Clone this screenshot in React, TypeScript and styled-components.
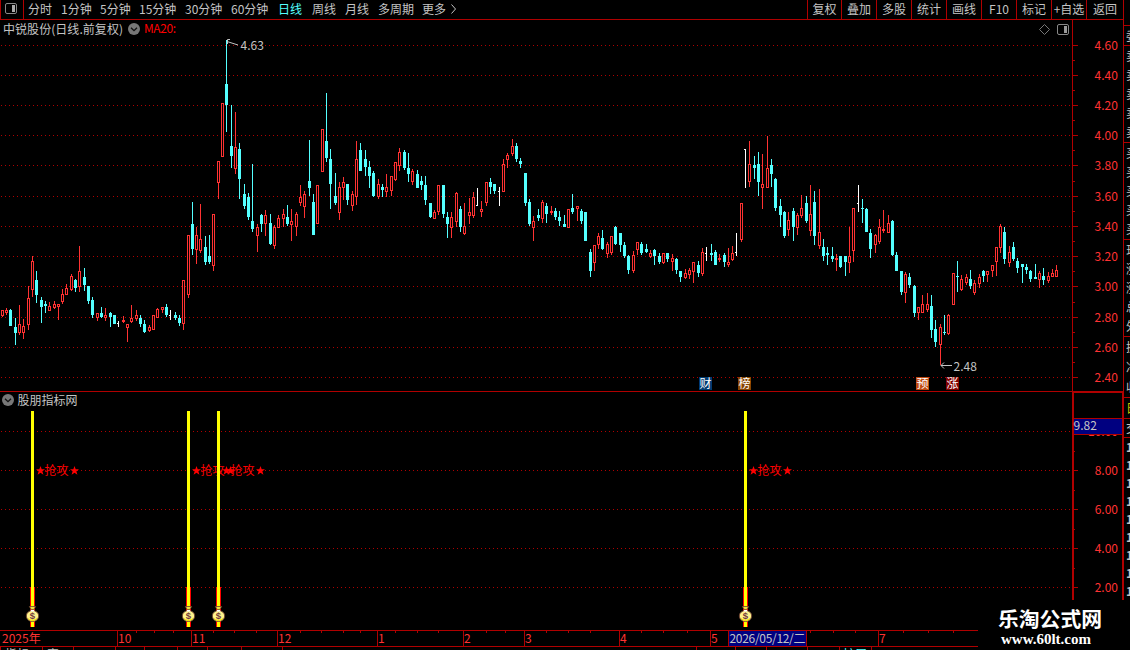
import React from 'react';
import styled, { createGlobalStyle } from 'styled-components';

const FONT = '"Noto Sans CJK SC", "Liberation Sans", sans-serif';
const LINE = '#b00000';
const RED = '#ff3232';
const CYAN = '#54ffff';
const GREY = '#c4c4c4';

const GlobalStyle = createGlobalStyle`
  body { margin: 0; background: #000; overflow: hidden; }
  * { box-sizing: border-box; }
`;

const Screen = styled.div`
  width: 1130px;
  height: 650px;
  background: #000;
  color: ${GREY};
  font: 400 12px/18px ${FONT};
  display: grid;
  grid-template-columns: 1124px 6px;
  overflow: hidden;
  position: relative;
  white-space: nowrap;
`;

const Terminal = styled.div`
  display: grid;
  grid-template-rows: 20px 371px 239px 17px 3px;
  min-width: 0;
`;

const Toolbar = styled.div`
  display: flex;
  justify-content: space-between;
  border-bottom: 1px solid ${LINE};
  border-right: 1px solid ${LINE};
`;

const Periods = styled.div`
  display: flex;
`;

const LayoutToggle = styled.div`
  width: 24px;
  border-left: 1px solid ${LINE};
  border-right: 1px solid ${LINE};
  margin-right: 4px;
  svg { display: block; }
`;

const Period = styled.span<{ $w: number; $active?: boolean }>`
  width: ${p => p.$w}px;
  color: ${p => (p.$active ? CYAN : GREY)};
`;

const Tools = styled.div`
  display: flex;
`;

const Tool = styled.span<{ $w: number }>`
  width: ${p => p.$w}px;
  border-left: 1px solid ${LINE};
  text-align: center;
`;

const PanelRow = styled.div`
  display: grid;
  grid-template-columns: 1072px 52px;
  svg { display: block; }
`;

const TimeRow = styled.div`
  svg { display: block; }
`;

const QuoteStrip = styled.div`
  overflow: hidden;
  height: 600px;
  padding-top: 25px;
`;

const QuoteGroup = styled.div<{ $h: number }>`
  height: ${p => p.$h}px;
  border-top: 1px solid ${LINE};
  display: flex;
  flex-direction: column;
  justify-content: space-around;
  padding-left: 2px;
  overflow: hidden;
`;

const QuoteCell = styled.span<{ $color?: string; $bold?: boolean }>`
  color: ${p => p.$color || GREY};
  font-weight: ${p => (p.$bold ? 700 : 400)};
  line-height: 14px;
`;

const Watermark = styled.div`
  position: absolute;
  left: 978px;
  top: 600px;
  width: 152px;
  height: 50px;
  background: #000;
  color: #fff;
  padding: 5px 0 0 20px;
`;

const SiteName = styled.div`
  font: 700 20.8px/26px ${FONT};
`;

const SiteUrl = styled.div`
  font: 700 15px/16px "Liberation Serif", serif;
  padding-left: 3px;
`;

/* x, high, body top, body bottom, low, kind (r = up, c = down, w = flat) */
const SERIES = `
2 310 310 316 317 r;6 308 310 313 315 r;10 309 310 326 326 c;15 318 327 333 345 c;19 305 324 333 335 r;23 319 326 333 339 r;
28 286 298 325 330 r;32 256 261 290 297 r;36 271 280 295 303 c;41 297 300 307 323 c;45 301 304 306 313 c;49 302 306 311 311 r;
54 301 304 308 309 r;58 304 304 307 320 r;62 289 294 302 304 r;66 284 288 295 295 r;71 274 276 290 291 r;75 279 280 288 292 c;
79 246 271 287 292 r;84 268 277 285 291 c;88 286 286 301 304 c;92 297 300 315 318 c;97 313 313 318 321 r;101 307 313 317 318 c;
105 308 315 318 321 r;110 312 313 317 327 c;114 315 315 324 324 c;118 321 323 324 327 w;123 316 320 322 323 r;127 324 324 328 342 r;
131 305 318 322 323 r;136 310 315 319 321 r;140 315 318 324 327 c;144 320 324 332 333 c;149 325 327 331 332 r;153 315 315 330 330 r;
157 308 309 318 318 r;162 307 307 310 313 r;166 304 307 315 317 c;170 310 315 316 320 w;175 312 315 318 320 c;179 315 318 323 326 c;
183 280 280 324 330 r;188 235 235 295 298 r;192 202 224 249 255 c;196 227 235 250 264 r;200 204 239 251 253 r;205 236 247 262 265 c;
209 235 256 262 264 c;213 214 214 266 271 r;218 161 161 183 199 r;222 103 103 157 157 r;226 40 84 105 132 c;231 105 146 156 168 c;
235 112 147 169 174 r;239 143 149 179 199 c;244 184 194 206 209 c;248 193 197 217 220 c;252 164 221 229 232 c;257 224 227 236 252 r;
261 214 215 224 232 c;265 210 215 224 236 r;270 214 223 244 245 c;274 225 227 246 249 r;278 215 218 228 228 r;283 209 214 219 227 r;
287 205 217 224 226 c;291 209 221 225 241 r;296 212 214 227 236 r;300 185 197 203 206 r;304 191 194 207 218 r;309 140 181 188 196 c;
313 194 202 235 235 c;317 185 185 224 224 r;322 129 129 172 172 r;326 93 141 158 162 c;330 149 159 184 209 c;335 173 196 203 205 c;
339 182 187 213 220 r;343 177 182 188 200 r;347 184 184 200 205 c;352 191 194 206 211 r;356 141 159 197 205 r;360 143 150 171 171 c;
365 150 159 167 176 c;369 161 167 176 188 c;373 171 173 196 197 c;378 179 184 197 199 r;382 184 187 190 197 c;386 174 187 192 197 r;
391 176 176 191 196 r;395 162 162 180 181 r;399 148 152 166 171 r;404 150 152 168 170 c;408 153 168 174 182 c;412 169 171 182 185 r;
417 170 174 188 188 c;421 176 181 185 190 c;425 176 185 200 205 c;430 203 203 217 218 c;434 210 212 219 219 r;438 185 185 212 215 r;
443 185 185 214 218 c;447 212 217 224 238 c;451 212 217 228 238 r;456 192 193 222 227 r;460 206 209 227 232 c;464 203 226 234 235 r;
469 198 212 216 224 r;473 192 197 216 218 r;477 188 205 206 206 w;481 201 209 212 217 r;486 182 182 203 206 r;490 178 182 187 194 c;
494 184 184 191 194 c;499 187 191 192 206 w;503 159 164 192 192 r;507 153 155 160 168 r;512 139 146 154 156 r;516 143 146 159 162 c;
520 158 161 164 168 c;525 173 173 203 206 c;529 199 202 224 226 c;533 216 221 228 241 r;538 209 215 218 221 c;542 200 202 219 223 r;
546 203 206 214 223 c;551 206 211 213 215 r;555 208 211 217 220 c;559 211 217 221 226 c;564 215 224 227 227 c;568 209 209 228 228 r;
572 194 208 212 214 c;577 206 206 209 221 r;581 209 211 221 224 c;585 212 212 241 241 c;590 249 252 271 277 c;594 245 245 263 271 r;
598 233 236 245 249 r;602 230 238 249 250 c;607 242 244 254 258 r;611 236 236 253 255 r;615 226 227 244 245 c;620 233 233 245 252 c;
624 242 245 256 258 c;628 255 256 270 274 c;633 251 255 271 273 r;637 242 242 250 255 r;641 242 244 253 255 c;646 244 249 252 253 c;
650 250 253 257 258 r;654 249 250 256 265 c;659 253 256 262 264 c;663 253 253 263 264 r;667 253 253 259 262 c;672 254 258 262 271 r;
676 258 259 270 274 c;680 271 271 277 282 c;685 269 273 278 279 r;689 268 270 275 279 r;693 262 262 272 283 r;698 261 265 273 277 c;
702 248 252 274 276 r;706 247 253 254 261 w;711 244 253 255 261 c;715 250 252 265 265 c;719 254 258 260 262 r;724 253 255 262 267 c;
728 248 262 265 267 r;732 246 253 260 261 r;736 233 252 253 256 w;741 203 203 240 242 r;745 149 149 150 188 w;749 141 164 182 187 r;
754 156 165 168 179 c;758 152 164 182 196 c;762 154 184 188 209 r;767 136 168 188 188 r;771 159 165 174 187 c;775 178 179 208 211 c;
780 199 206 215 227 c;784 211 212 236 238 c;788 212 220 230 236 r;793 208 211 227 241 c;797 213 215 228 235 r;801 195 208 216 218 r;
806 196 203 221 223 c;810 185 214 231 236 r;814 191 202 236 245 c;819 189 232 246 249 r;823 239 247 256 261 c;827 247 253 255 265 c;
832 247 256 259 262 c;836 254 258 260 271 r;840 256 256 267 268 c;845 256 256 262 276 c;849 227 256 263 273 r;853 208 208 251 262 r;
858 185 203 204 212 w;862 199 208 209 223 c;866 208 209 232 232 c;870 229 233 249 258 c;875 234 235 245 253 r;879 219 227 242 244 r;
883 210 229 231 233 r;888 215 223 233 233 r;892 220 221 255 256 c;896 252 255 271 271 c;901 271 271 292 295 c;905 272 274 293 303 r;
909 273 277 285 288 c;914 285 286 313 317 c;918 307 307 313 320 r;922 295 304 313 313 r;927 293 304 310 312 r;931 295 306 330 338 c;
935 320 329 342 347 c;940 324 327 345 365 r;944 315 332 333 335 c;948 314 315 334 335 r;953 273 273 305 305 r;957 261 276 277 292 c;
961 275 279 290 291 r;966 274 277 283 285 r;970 270 279 286 289 c;974 280 283 293 295 r;979 274 277 284 288 r;983 270 271 276 282 c;
987 271 271 275 282 r;992 265 265 271 277 r;996 247 247 262 276 r;1000 224 226 248 253 r;1004 227 232 259 264 c;1009 246 252 263 267 r;
1013 242 247 259 261 c;1017 258 261 268 273 c;1022 264 264 267 283 c;1026 264 267 270 274 c;1030 270 271 279 282 c;1035 264 277 279 279 c;
1039 271 273 280 288 r;1043 268 276 280 285 c;1048 272 276 281 283 r;1052 269 273 277 277 r;1056 265 270 277 277 r`;

const candles = SERIES.trim().split(';').map(row => {
  const [x, high, top, bottom, low, kind] = row.trim().split(' ');
  return { x: +x, high: +high, top: +top, bottom: +bottom, low: +low, kind };
});

type CandleProps = { x: number; high: number; top: number; bottom: number; low: number; kind: string };

const Candle = ({ x, high, top, bottom, low, kind }: CandleProps) => {
  if (kind === 'w') {
    return (
      <g fill="#fff">
        <rect x={x} y={high} width={1} height={low - high} />
        <rect x={x - 1} y={top} width={1} height={1} />
      </g>
    );
  }
  const color = kind === 'r' ? RED : CYAN;
  return (
    <g fill={color}>
      <rect x={x} y={high} width={1} height={low - high} />
      <rect x={x - 1} y={top} width={3} height={bottom - top} />
      {kind === 'r' && bottom - top > 2 && <rect x={x} y={top + 1} width={1} height={bottom - top - 2} fill="#000" />}
    </g>
  );
};

const GridLine = ({ y }: { y: number }) => (
  <line x1={1} x2={1072} y1={y + 0.5} y2={y + 0.5} stroke={LINE} strokeDasharray="1 3" />
);

const Chevron = ({ cx, cy }: { cx: number; cy: number }) => (
  <g>
    <circle cx={cx} cy={cy} r={6} fill="#777" />
    <path d={`M${cx - 3} ${cy - 1.3}l3 3l3 -3`} stroke="#111" strokeWidth={1.3} fill="none" />
  </g>
);

const PRICE_TICKS: [string, number][] = [
  ['4.60', 45], ['4.40', 75], ['4.20', 105], ['4.00', 135], ['3.80', 165], ['3.60', 196],
  ['3.40', 226], ['3.20', 256], ['3.00', 286], ['2.80', 317], ['2.60', 347], ['2.40', 377],
];
const PRICE_MINOR = [60, 90, 120, 150, 181, 211, 241, 271, 302, 332, 362];
const IND_TICKS: [string, number][] = [['10.00', 431], ['8.00', 470], ['6.00', 509], ['4.00', 548], ['2.00', 587]];
const IND_MINOR = [451, 490, 529, 568];

const BADGES: [string, number, string][] = [
  ['财', 699, '#003a70'], ['榜', 738, '#884400'], ['预', 916, '#c04a10'], ['涨', 946, '#800000'],
];

const PriceChart = () => (
  <svg width={1072} height={371} viewBox="0 20 1072 371" shapeRendering="crispEdges" fontFamily={FONT} fontSize={12}>
    {PRICE_TICKS.map(([l, y]) => <GridLine key={l} y={y} />)}
    {candles.map(c => <Candle key={c.x} {...c} />)}
    <g shapeRendering="auto">
      <text x={3} y={33.5} fill={GREY} textLength={120}>中锐股份(日线.前复权)</text>
      <Chevron cx={134} cy={29} />
      <text x={144} y={33} fill="#f00" textLength={32}>MA20:</text>
      <path d="M1044.5 24.5l5 5l-5 5l-5-5z" fill="none" stroke="#777" />
      <rect x={1057.5} y={24.5} width={11} height={10} rx={1.5} fill="none" stroke="#888" />
      <rect x={1064} y={26} width={3} height={7} fill="#999" />
      <path d="M227 41.5L238 45M230 39.5H227.5V44" stroke={GREY} fill="none" />
      <text x={240.5} y={50} fill={GREY} textLength={23.5}>4.63</text>
      <path d="M941 365.5H952M944 362.5l-3 3l3 3" stroke={GREY} fill="none" />
      <text x={953.5} y={371} fill={GREY} textLength={23.5}>2.48</text>
    </g>
    {BADGES.map(([t, x, c]) => (
      <g key={t}>
        <rect x={x} y={377} width={13} height={13} fill={c} />
        <text x={x + 0.5} y={388} fill="#fff">{t}</text>
      </g>
    ))}
  </svg>
);

const PriceAxis = () => (
  <svg width={52} height={371} viewBox="1072 20 52 371" shapeRendering="crispEdges" fontFamily={FONT} fontSize={12}>
    <rect x={1072} y={20} width={1} height={371} fill={LINE} />
    <rect x={1123} y={20} width={1} height={371} fill={LINE} />
    {PRICE_MINOR.map(y => <rect key={y} x={1073} y={y} width={2} height={1} fill={LINE} />)}
    {PRICE_TICKS.map(([l, y]) => (
      <g key={l}>
        <rect x={1073} y={y} width={5} height={1} fill={LINE} />
        <text x={1094.5} y={y + 5} fill={RED} textLength={23.5}>{l}</text>
      </g>
    ))}
  </svg>
);

const STAR = 'M0-4.5L1.2-1.3H4.5L1.9.8L2.9 4.2L0 2.2L-2.9 4.2L-1.9.8L-4.5-1.3H-1.2Z';

const MoneyBag = ({ x }: { x: number }) => (
  <g shapeRendering="auto" transform={`translate(${x + 0.5} 606)`}>
    <path d="M-3.2.5H3.2L1.2 3.5H-1.2Z" fill="#f4e23c" stroke="#6b4030" strokeWidth={0.8} />
    <ellipse cx={0} cy={10} rx={6.2} ry={5.5} fill="#fff28c" stroke="#6b4030" strokeWidth={0.9} />
    <path d="M-5 11.5Q-3.5 15 0 15Q3.5 15 5 11.5Q2 14 0 13.8Q-3 13.8-5 11.5Z" fill="#f5e400" />
    <path d="M-1.5 4L1.5 4L2 5.5H-2Z" fill="#fff" />
    <text x={0} y={13.3} textAnchor="middle" fontFamily="Liberation Sans, sans-serif" fontWeight={700} fontSize={9.5} fill="#743c3c">$</text>
  </g>
);

const Signal = ({ x }: { x: number }) => (
  <g>
    <rect x={x - 2} y={587} width={5} height={40} fill="#f00" />
    <rect x={x - 1} y={411} width={3} height={216} fill="#ff0" />
    <MoneyBag x={x} />
    <g fill="#f00" shapeRendering="auto">
      <path d={STAR} transform={`translate(${x + 8.5} 470.5)`} />
      <text x={x + 12.5} y={475}>抢攻</text>
      <path d={STAR} transform={`translate(${x + 42.5} 470.5)`} />
    </g>
  </g>
);

const IndicatorChart = () => (
  <svg width={1072} height={239} viewBox="0 391 1072 239" shapeRendering="crispEdges" fontFamily={FONT} fontSize={12}>
    <rect x={0} y={391} width={1072} height={1} fill={LINE} />
    {IND_TICKS.map(([l, y]) => <GridLine key={l} y={y} />)}
    <g shapeRendering="auto">
      <Chevron cx={8} cy={400} />
      <text x={17.5} y={404.5} fill={GREY}>股朋指标网</text>
    </g>
    {[32, 188, 218, 745].map(x => <Signal key={x} x={x} />)}
  </svg>
);

const IndicatorAxis = () => (
  <svg width={52} height={239} viewBox="1072 391 52 239" shapeRendering="crispEdges" fontFamily={FONT} fontSize={12}>
    <path d="M1073 600V392H1123V600" fill="none" stroke={LINE} strokeWidth={2} />
    {IND_MINOR.map(y => <rect key={y} x={1074} y={y} width={1} height={1} fill={LINE} />)}
    {IND_TICKS.map(([l, y]) => (
      <g key={l}>
        <rect x={1074} y={y} width={4} height={1} fill={LINE} />
        <text x={1118} y={y + 5} textAnchor="end" fill={RED}>{l}</text>
      </g>
    ))}
    <rect x={1074} y={418} width={48} height={17} fill={LINE} />
    <rect x={1074} y={419} width={48} height={15} fill="#000080" />
    <text x={1073.5} y={430} fill={GREY} textLength={23.5}>9.82</text>
  </svg>
);

const MONTHS: [string, number, number][] = [
  ['2025年', 2, -1], ['10', 118, 117], ['11', 192, 191], ['12', 278, 277], ['1', 378, 377], ['2', 464, 463],
  ['3', 525, 524], ['4', 620, 619], ['5', 711, 710], ['7', 879, 878],
];
const WEEK_TICKS = [
  136, 154, 173, 213, 234, 256, 300, 321, 343, 360, 395, 417, 438, 486, 505, 546, 568, 590, 641, 663, 687,
  810, 833, 855, 903, 928, 953,
];

const TimeAxis = () => (
  <svg width={1124} height={17} viewBox="0 630 1124 17" shapeRendering="crispEdges" fontFamily={FONT} fontSize={12}>
    <g fill={LINE}>
      <rect x={0} y={630} width={978} height={1} />
      <rect x={0} y={646} width={978} height={1} />
      {WEEK_TICKS.map(x => <rect key={x} x={x} y={631} width={1} height={2} />)}
      {MONTHS.map(m => <rect key={m[2]} x={m[2]} y={631} width={1} height={15} />)}
      <rect x={728} y={631} width={79} height={15} />
    </g>
    {MONTHS.map(([t, x]) => <text key={t} x={x} y={643} fill={RED}>{t}</text>)}
    <rect x={729} y={631} width={77} height={15} fill="#000080" />
    <text x={729.5} y={642.5} fill={GREY} textLength={76}>2026/05/12/二</text>
  </svg>
);

const TAB_EDGES = [0, 42, 73, 115, 144, 177, 207, 241, 282, 696, 735, 766, 807, 839, 871];

const BottomTabs = () => (
  <svg width={1124} height={3} viewBox="0 647 1124 3" shapeRendering="crispEdges" fontFamily={FONT} fontSize={12}>
    {TAB_EDGES.map(x => <rect key={x} x={x} y={647} width={1} height={3} fill={LINE} />)}
    <text x={5} y={659} fill={GREY}>指标</text>
    <text x={47} y={659} fill={GREY}>窗</text>
    <text x={843} y={659} fill={CYAN}>扩展</text>
  </svg>
);

const PERIODS: [string, number][] = [
  ['分时', 33], ['1分钟', 39], ['5分钟', 39], ['15分钟', 46], ['30分钟', 46], ['60分钟', 47], ['日线', 34],
  ['周线', 33], ['月线', 33], ['多周期', 44], ['更多', 28],
];
const TOOLS: [string, number][] = [
  ['复权', 34], ['叠加', 35], ['多股', 35], ['统计', 35], ['画线', 35], ['F10', 35], ['标记', 35], ['+自选', 35], ['返回', 37],
];
const QUOTES: [string, number][] = [['委', 20], ['卖卖卖卖卖', 97], ['买买买买买', 97], ['现涨涨总外', 97], ['换净收', 61]];

const App = () => (
  <>
    <GlobalStyle />
    <Screen>
      <Terminal>
        <Toolbar>
          <Periods>
            <LayoutToggle>
              <svg width={20} height={19}>
                <rect x={4.5} y={3.5} width={11} height={10} rx={1.5} fill="none" stroke="#888" />
                <rect x={11} y={5} width={3} height={7} fill="#aaa" />
              </svg>
            </LayoutToggle>
            {PERIODS.map(([t, w]) => <Period key={t} $w={w} $active={t === '日线'}>{t}</Period>)}
            <svg width={8} height={19}>
              <path d="M1.5 4.5l4 4.5l-4 4.5" fill="none" stroke={GREY} />
            </svg>
          </Periods>
          <Tools>
            {TOOLS.map(([t, w]) => <Tool key={t} $w={w}>{t}</Tool>)}
          </Tools>
        </Toolbar>
        <PanelRow>
          <PriceChart />
          <PriceAxis />
        </PanelRow>
        <PanelRow>
          <IndicatorChart />
          <IndicatorAxis />
        </PanelRow>
        <TimeRow><TimeAxis /></TimeRow>
        <TimeRow><BottomTabs /></TimeRow>
      </Terminal>
      <QuoteStrip>
        {QUOTES.map(([t, h], i) => (
          <QuoteGroup key={i} $h={h}>
            {t.split('').map((c, j) => <QuoteCell key={j}>{c}</QuoteCell>)}
          </QuoteGroup>
        ))}
        <QuoteGroup $h={21}><QuoteCell $color="#c8c800">日</QuoteCell></QuoteGroup>
        <QuoteGroup $h={19}><QuoteCell>交</QuoteCell></QuoteGroup>
        <QuoteGroup $h={163}>
          {Array.from({ length: 9 }, (_, i) => <QuoteCell key={i} $bold>1</QuoteCell>)}
        </QuoteGroup>
      </QuoteStrip>
      <Watermark>
        <SiteName>乐淘公式网</SiteName>
        <SiteUrl>www.60lt.com</SiteUrl>
      </Watermark>
    </Screen>
  </>
);

export default App;
